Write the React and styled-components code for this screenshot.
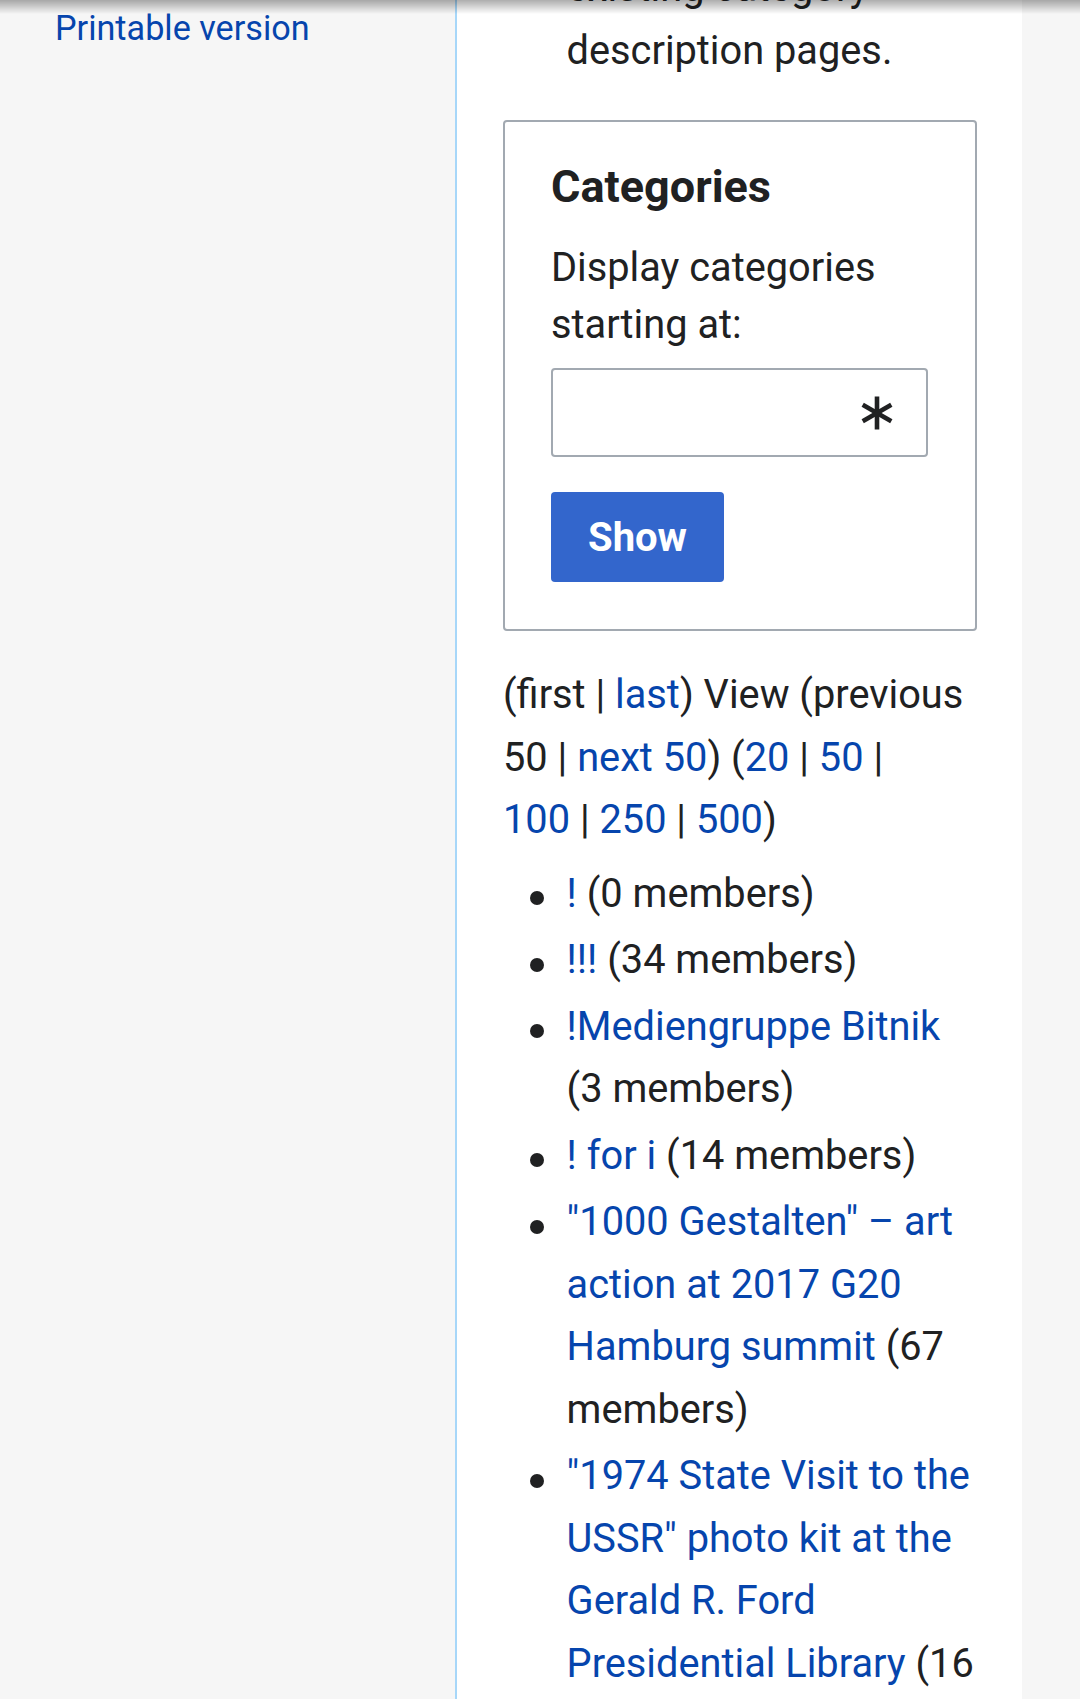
import styled, { createGlobalStyle } from 'styled-components';

const GlobalStyle = createGlobalStyle`
  html, body {
    margin: 0;
    padding: 0;
  }
  body {
    background: #f6f6f6;
    font-family: Roboto, "Noto Sans", "Liberation Sans", sans-serif;
    color: #202122;
    overflow: hidden;
  }
`;

const Page = styled.div`
  display: flex;
  height: 1699px;
  overflow: hidden;
  background: #f6f6f6;
`;

const TopShadow = styled.div`
  position: fixed;
  top: 0;
  left: 0;
  right: 0;
  height: 14px;
  background: linear-gradient(rgba(0, 0, 0, 0.32), rgba(0, 0, 0, 0));
  pointer-events: none;
`;

const Sidebar = styled.nav`
  width: 455px;
  flex-shrink: 0;
  padding-left: 55px;
  box-sizing: border-box;
`;

const ToolLink = styled.a`
  display: block;
  margin-top: 7.5px;
  font-size: 34.2px;
  line-height: 41.4px;
  color: #0645ad;
  text-decoration: none;
`;

const Content = styled.main`
  width: 567px;
  flex-shrink: 0;
  box-sizing: border-box;
  background: #fff;
  border-left: 2px solid #a7d7f9;
  padding: 0 45px 0 46px;
  font-size: 39.75px;
  line-height: 62.5px;
`;

const BulletList = styled.ul`
  margin: ${(p) => p.$top || 0} 0 0;
  padding-left: 63.6px;
  list-style: none;
`;

const Item = styled.li`
  position: relative;
  margin-bottom: 4px;

  &:last-child {
    margin-bottom: 0;
  }
  &::before {
    content: '';
    position: absolute;
    left: -36.3px;
    top: 28.3px;
    width: 14px;
    height: 14px;
    border-radius: 50%;
    background: #202122;
  }
`;

const Link = styled.a`
  color: #0645ad;
  text-decoration: none;
`;

const FormBox = styled.form`
  margin-top: 37.6px;
  border: 2px solid #a2a9b1;
  border-radius: 4px;
  padding: 33px 47px 47px 46px;
`;

const Legend = styled.h2`
  margin: 0;
  font-size: 45px;
  line-height: 63px;
  font-weight: 700;
`;

const Label = styled.label`
  display: block;
  margin-top: 20.6px;
  line-height: 57.4px;
`;

const InputBox = styled.div`
  margin-top: 14.6px;
  width: 377px;
  height: 89px;
  box-sizing: border-box;
  border: 2px solid #a2a9b1;
  border-radius: 4px;
  display: flex;
  align-items: center;
  padding-right: 33px;
`;

const Field = styled.input`
  flex: 1;
  min-width: 0;
  height: 100%;
  border: 0;
  outline: 0;
  background: transparent;
  font: inherit;
`;

const ShowButton = styled.button`
  display: block;
  margin-top: 35px;
  height: 90px;
  width: 173px;
  border: 0;
  border-radius: 4px;
  background: #36c;
  color: #fff;
  font-family: inherit;
  font-size: 40px;
  font-weight: 700;
  padding: 0;
`;

const Pager = styled.p`
  margin: 33.3px 0 0;
`;

function Asterisk() {
  return (
    <svg width="32" height="34" viewBox="0 0 32 34" aria-hidden="true">
      <g stroke="#202122" strokeWidth="4.6" strokeLinecap="butt">
        <line x1="16" y1="0.5" x2="16" y2="33.5" />
        <line x1="1.7" y1="8.75" x2="30.3" y2="25.25" />
        <line x1="1.7" y1="25.25" x2="30.3" y2="8.75" />
      </g>
    </svg>
  );
}

const categories = [
  { name: '!', count: '(0 members)' },
  { name: '!!!', count: '(34 members)' },
  { name: '!Mediengruppe Bitnik', count: '(3 members)' },
  { name: '! for i', count: '(14 members)' },
  { name: '"1000 Gestalten" – art action at 2017 G20 Hamburg summit', count: '(67 members)' },
  {
    name: '"1974 State Visit to the USSR" photo kit at the Gerald R. Ford Presidential Library',
    count: '(16 members)',
  },
  { name: '"A Game of Shark and Minnow"', count: '(2 members)' },
];

// separator keeps the pipe glued to the number before it
const sep = '\u00a0| ';

export default function App() {
  return (
    <>
      <GlobalStyle />
      <Page>
        <Sidebar>
          <ToolLink href="#">Printable version</ToolLink>
        </Sidebar>
        <Content>
          <BulletList $top="-42.6px">
            <Item>existing category description pages.</Item>
          </BulletList>
          <FormBox onSubmit={(e) => e.preventDefault()}>
            <Legend>Categories</Legend>
            <Label htmlFor="from">Display categories starting at:</Label>
            <InputBox>
              <Field id="from" type="text" />
              <Asterisk />
            </InputBox>
            <ShowButton type="submit">Show</ShowButton>
          </FormBox>
          <Pager>
            (first{sep}<Link href="#">last</Link>) View (previous 50{sep}
            <Link href="#">next 50</Link>) (<Link href="#">20</Link>
            {sep}
            <Link href="#">50</Link>
            {sep}
            <Link href="#">100</Link>
            {sep}
            <Link href="#">250</Link>
            {sep}
            <Link href="#">500</Link>)
          </Pager>
          <BulletList $top="11.2px">
            {categories.map((c) => (
              <Item key={c.name}>
                <Link href="#">{c.name}</Link> {c.count}
              </Item>
            ))}
          </BulletList>
        </Content>
      </Page>
      <TopShadow />
    </>
  );
}
